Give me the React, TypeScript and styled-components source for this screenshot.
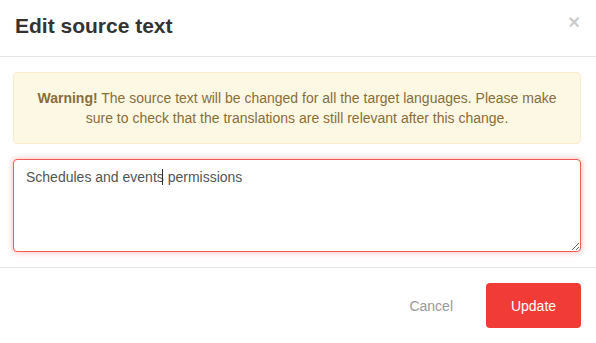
import React from 'react';
import styled, { createGlobalStyle } from 'styled-components';

const GlobalStyle = createGlobalStyle`
  html, body {
    margin: 0;
    padding: 0;
    background: #fff;
  }
  body {
    font-family: 'Liberation Sans', Arial, sans-serif;
    font-size: 14px;
    line-height: 20px;
    color: #333;
  }
  * {
    box-sizing: border-box;
  }
`;

const App: React.FC = () => {
  const [text, setText] = React.useState('Schedules and events permissions');

  return (
    <>
      <GlobalStyle />
      <Modal>
        <ModalHeader>
          <ModalTitle>Edit source text</ModalTitle>
          <CloseButton aria-label="Close">×</CloseButton>
        </ModalHeader>
        <ModalBody>
          <WarningAlert>
            <strong>Warning!</strong> The source text will be changed for all the target languages. Please make sure
            to check that the translations are still relevant after this change.
          </WarningAlert>
          <TextareaWrap>
            <SourceTextarea value={text} onChange={(e) => setText(e.target.value)} />
            <Caret />
          </TextareaWrap>
        </ModalBody>
        <ModalFooter>
          <CancelButton>Cancel</CancelButton>
          <UpdateButton>Update</UpdateButton>
        </ModalFooter>
      </Modal>
    </>
  );
};

export default App;

const Modal = styled.div`
  width: 596px;
  height: 343px;
  background: #fff;
  display: flex;
  flex-direction: column;
`;

const ModalHeader = styled.div`
  display: flex;
  justify-content: space-between;
  align-items: flex-start;
  height: 57px;
  padding: 14px 16px 0 15px;
  border-bottom: 1px solid #e5e5e5;
`;

const ModalTitle = styled.h4`
  margin: 0;
  font-size: 21px;
  line-height: 23px;
  font-weight: 700;
  color: #333;
`;

const CloseButton = styled.button`
  border: 0;
  background: transparent;
  padding: 0;
  margin-top: -2px;
  font-family: 'Liberation Sans', Arial, sans-serif;
  font-size: 20px;
  font-weight: 700;
  line-height: 1;
  color: #000;
  opacity: 0.2;
  cursor: pointer;
`;

const ModalBody = styled.div`
  display: flex;
  flex-direction: column;
  gap: 15px;
  padding: 15px 15px 15px 13px;
`;

const WarningAlert = styled.div`
  padding: 15px;
  background: #fcf8e3;
  border: 1px solid #faebcc;
  border-radius: 4px;
  color: #8a6d3b;
  text-align: center;
  font-size: 14px;
  line-height: 20px;

  strong {
    font-weight: 700;
  }
`;

const TextareaWrap = styled.div`
  position: relative;
`;

const SourceTextarea = styled.textarea`
  display: block;
  width: 100%;
  height: 93px;
  margin: 0;
  padding: 7px 12px;
  border: 1px solid #f25b57;
  border-radius: 4px;
  box-shadow: 0 0 6px rgba(242, 91, 87, 0.45);
  font-family: 'Liberation Sans', Arial, sans-serif;
  font-size: 14px;
  line-height: 20px;
  color: #555;
  outline: none;
  resize: vertical;
`;

const Caret = styled.span`
  position: absolute;
  left: 149px;
  top: 10px;
  width: 1px;
  height: 16px;
  background: #333;
  pointer-events: none;
`;

const ModalFooter = styled.div`
  display: flex;
  justify-content: flex-end;
  align-items: center;
  gap: 15px;
  padding: 15px;
  border-top: 1px solid #e5e5e5;
`;

const CancelButton = styled.button`
  border: 0;
  background: transparent;
  padding: 12px 18px;
  font-family: 'Liberation Sans', Arial, sans-serif;
  font-size: 14px;
  line-height: 20px;
  color: #999;
  cursor: pointer;
`;

const UpdateButton = styled.button`
  width: 95px;
  height: 45px;
  border: 0;
  border-radius: 4px;
  background: #f13b36;
  color: #fff;
  font-family: 'Liberation Sans', Arial, sans-serif;
  font-size: 14px;
  line-height: 20px;
  cursor: pointer;
`;
